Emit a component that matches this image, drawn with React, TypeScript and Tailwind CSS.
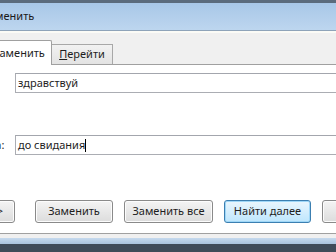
import React from "react";

const font = { fontFamily: '"Noto Sans", "Open Sans", sans-serif' };

function Btn({ label, w, focused, ml }: { label: string; w: number; focused?: boolean; ml?: string }) {
  return (
    <div
      className={`h-[23px] shrink-0 rounded-[3px] border flex items-center justify-center text-[11px] text-[#1e1e1e] ${
        focused
          ? "border-[#3c7fb1] bg-gradient-to-b from-[#eaf6fd] to-[#bee6fd] shadow-[inset_0_0_0_1px_#9fd7f7]"
          : "border-[#8a8a8a] bg-gradient-to-b from-[#f4f4f4] to-[#dcdcdc] shadow-[inset_0_0_0_1px_#fcfcfc]"
      } ${ml ?? ""}`}
      style={{ width: w }}
    >
      {label}
    </div>
  );
}

export default function App() {
  return (
    <div className="w-[336px] h-[252px] overflow-hidden flex flex-col bg-[#f0f0f0] select-none" style={font}>
      {/* window frame top */}
      <div className="h-[3px] shrink-0 bg-[#5b6b7c]" />
      {/* title bar */}
      <div className="h-[27px] shrink-0 flex items-center bg-gradient-to-b from-[#a8c7e7] to-[#bdd6ef] text-[11px] text-[#1a1a1a]">
        <span className="-ml-[62px] whitespace-nowrap">Найти и заменить</span>
      </div>
      <div className="h-px shrink-0 bg-[#8ea3b9]" />
      <div className="h-[2px] shrink-0 bg-[#fbfbf6]" />

      {/* tabs */}
      <div className="h-[31px] shrink-0 flex items-end pt-[6px]">
        <div className="-ml-[14px] h-[25px] w-[66px] shrink-0 bg-white border border-b-0 border-[#a0a0a0] rounded-t-[2px] flex items-center justify-center text-[11px] text-[#1e1e1e] relative z-10 -mb-px">
          Заменить
        </div>
        <div className="h-[20px] w-[61px] shrink-0 bg-gradient-to-b from-[#f2f2f2] to-[#e3e3e3] border border-b-0 border-l-0 border-[#a8a8a8] flex items-center justify-center text-[11px] text-[#1e1e1e]">
          <span>
            <span className="underline">П</span>ерейти
          </span>
        </div>
      </div>

      {/* tab panel */}
      <div className="h-[170px] shrink-0 bg-white border-t border-b border-[#a0a0a0] flex flex-col">
        <div className="flex items-center mt-[8px] -ml-[66px] -mr-[20px]">
          <span className="w-[81px] shrink-0 text-[11px] text-[#1e1e1e]">Найти:</span>
          <div className="flex-1 h-[20px] border border-[#abadb3] border-t-[#a3a6ad] flex items-center pl-[2px] text-[11px] text-[#1e1e1e]">
            здравствуй
          </div>
        </div>
        <div className="flex items-center mt-[42px] -ml-[66px] -mr-[20px]">
          <span className="w-[81px] shrink-0 text-[11px] text-[#1e1e1e] whitespace-nowrap">Заменить на:</span>
          <div className="flex-1 h-[20px] border border-[#abadb3] border-t-[#a3a6ad] flex items-center pl-[2px] text-[11px] text-[#1e1e1e]">
            до свидания
            <span className="inline-block w-px h-[13px] bg-black" />
          </div>
        </div>
        <div className="flex items-center gap-[11px] mt-[45px] -ml-[66px]">
          <Btn label="Больше >>" w={81} />
          <Btn label="Заменить" w={78} ml="ml-[9px]" />
          <Btn label="Заменить все" w={89} />
          <Btn label="Найти далее" w={87} focused />
          <Btn label="Отмена" w={78} />
        </div>
      </div>

      <div className="h-[4px] shrink-0 bg-[#f0f0f0]" />
      {/* window frame bottom */}
      <div className="h-[6px] shrink-0 bg-gradient-to-b from-[#c6daee] to-[#a9c3de]" />
      <div className="flex-1 bg-[#3f4b59]" />
    </div>
  );
}
